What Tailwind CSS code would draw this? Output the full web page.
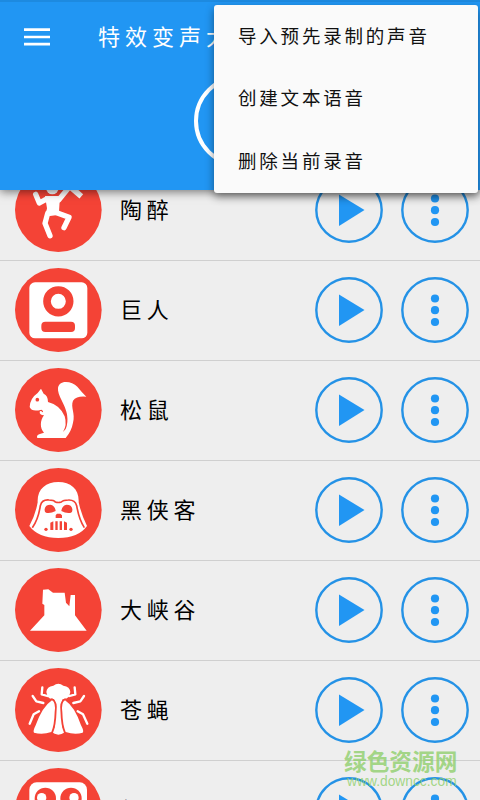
<!DOCTYPE html>
<html lang="zh-CN">
<head>
<meta charset="utf-8">
<title>特效变声大师</title>
<script src="https://cdn.jsdelivr.net/npm/@tailwindcss/browser@4"></script>
</head>
<body class="bg-[#eeeeee] font-['Noto_Sans_CJK_SC',sans-serif]">
<svg class="hidden">
  <symbol id="play" viewBox="0 0 68 66"><ellipse cx="34" cy="33" rx="32.7" ry="31.7" fill="none" stroke="#2492e6" stroke-width="2.4"/><path d="M24 17.5L49.5 33L24 49z" fill="#2196f3"/></symbol>
  <symbol id="more" viewBox="0 0 68 66"><ellipse cx="34" cy="33" rx="32.7" ry="31.7" fill="none" stroke="#2492e6" stroke-width="2.4"/><g fill="#2196f3"><circle cx="34" cy="21.5" r="4.1"/><circle cx="34" cy="33.2" r="4.1"/><circle cx="34" cy="45" r="4.1"/></g></symbol>
</svg>
<div class="relative h-[800px] w-[480px] overflow-hidden">
  <header class="relative z-10 h-[190px] border-t-2 border-[#1d8ae0] bg-[#2196f3] shadow-[0_2px_9px_rgba(0,0,0,0.5)]">
    <div class="flex h-[70px] items-center pl-6">
      <svg class="h-[18px] w-[26px]" viewBox="0 0 26 18"><path d="M0 1.7H26M0 9H26M0 16.2H26" stroke="#fff" stroke-width="2.7"/></svg>
      <h1 class="ml-[48px] whitespace-nowrap pb-1 text-[22px] leading-none tracking-[5px] text-white">特效变声大师</h1>
    </div>
    <div class="mx-auto mt-[3px] h-[92px] w-[92px] rounded-full border-4 border-white"></div>
  </header>

  <main class="-mt-[29px]">
    <section class="flex h-[100px] border-b border-[#cfcfcf] pt-[7px] pl-[15px]">
      <div class="flex h-[84px] w-full items-center">
        <svg class="h-[84px] w-[87px]" viewBox="45 24 261 252"><ellipse cx="175" cy="150" rx="130" ry="126" fill="#f44336"/><g fill="none" stroke="#fff" stroke-width="16" stroke-linecap="round" stroke-linejoin="round"><path d="M107 103L118 129L142 116M176 120L207 82L186 70M143 160L135 190L150 227M170 158L207 172L192 203"/></g><path d="M135 108H180L177 155L190 163L150 168L136 168L141 145z" fill="#fff"/><circle cx="157" cy="84" r="19" fill="#fff"/><path d="M215 84L244 109" stroke="#fff" stroke-width="17"/></svg>
        <span class="ml-[18px] w-[195px] pb-1 text-[22px] leading-none tracking-[4.7px] text-black">陶醉</span>
        <svg class="h-[66px] w-[68px]"><use href="#play"/></svg>
        <svg class="ml-[18px] h-[66px] w-[68px]"><use href="#more"/></svg>
      </div>
    </section>
    <section class="flex h-[100px] border-b border-[#cfcfcf] pt-[7px] pl-[15px]">
      <div class="flex h-[84px] w-full items-center">
        <svg class="h-[84px] w-[87px]" viewBox="45 24 261 252"><ellipse cx="175" cy="150" rx="130" ry="126" fill="#f44336"/><rect x="88" y="67" width="174" height="168" rx="17" fill="#fff"/><circle cx="175" cy="124" r="34" fill="none" stroke="#f44336" stroke-width="23"/><rect x="124" y="185" width="101" height="31" rx="12" fill="#f44336"/></svg>
        <span class="ml-[18px] w-[195px] pb-1 text-[22px] leading-none tracking-[4.7px] text-black">巨人</span>
        <svg class="h-[66px] w-[68px]"><use href="#play"/></svg>
        <svg class="ml-[18px] h-[66px] w-[68px]"><use href="#more"/></svg>
      </div>
    </section>
    <section class="flex h-[100px] border-b border-[#cfcfcf] pt-[7px] pl-[15px]">
      <div class="flex h-[84px] w-full items-center">
        <svg class="h-[84px] w-[87px]" viewBox="45 24 261 252"><ellipse cx="175" cy="150" rx="130" ry="126" fill="#f44336"/><path d="M123 86L131 101Q144 107 144 126Q180 135 194 169Q202 195 189 216L197 207Q205 190 201 163C197 135 171 105 174 83C180 58 216 64 232 80Q244 95 259 110Q230 107 219 122C211 142 227 160 219 188Q215 212 197 234H112Q107 225 122 221L132 218C119 205 120 181 132 166Q118 165 119 155Q121 150 128 157Q132 154 124 149Q95 157 89 141Q90 115 113 99z" fill="#fff"/><circle cx="112" cy="119" r="5.5" fill="#f44336"/></svg>
        <span class="ml-[18px] w-[195px] pb-1 text-[22px] leading-none tracking-[4.7px] text-black">松鼠</span>
        <svg class="h-[66px] w-[68px]"><use href="#play"/></svg>
        <svg class="ml-[18px] h-[66px] w-[68px]"><use href="#more"/></svg>
      </div>
    </section>
    <section class="flex h-[100px] border-b border-[#cfcfcf] pt-[7px] pl-[15px]">
      <div class="flex h-[84px] w-full items-center">
        <svg class="h-[84px] w-[87px]" viewBox="45 24 261 252"><ellipse cx="175" cy="150" rx="130" ry="126" fill="#f44336"/><path d="M113 127C111 88 137 66 175 66S238 88 236 127Q244 164 261 198Q235 234 175 234T88 198Q107 163 113 127z" fill="#fff"/><path d="M97 203Q115 178 121 137Q126 118 147 120Q162 120 166 126Q175 129 184 126Q190 120 205 120Q225 119 230 137Q237 178 253 203" fill="none" stroke="#f44336" stroke-width="5"/><g fill="#f44336"><path d="M134 147Q136 134 151 134Q165 136 167 153Q151 161 138 158Q133 156 134 147zM217 147Q215 134 200 134Q186 136 184 153Q199 161 213 158Q218 156 217 147zM167 174V166L171 161H181L186 166V174zM151 188L160 184V210H151zM166 184H173V210H166zM179 184H186V210H179zM192 184L201 188V210H192z"/><circle cx="138" cy="208" r="5"/><circle cx="213" cy="208" r="5"/></g></svg>
        <span class="ml-[18px] w-[195px] pb-1 text-[22px] leading-none tracking-[4.7px] text-black">黑侠客</span>
        <svg class="h-[66px] w-[68px]"><use href="#play"/></svg>
        <svg class="ml-[18px] h-[66px] w-[68px]"><use href="#more"/></svg>
      </div>
    </section>
    <section class="flex h-[100px] border-b border-[#cfcfcf] pt-[7px] pl-[15px]">
      <div class="flex h-[84px] w-full items-center">
        <svg class="h-[84px] w-[87px]" viewBox="45 24 261 252"><ellipse cx="175" cy="150" rx="130" ry="126" fill="#f44336"/><path d="M129 89L145 88L159 98H194L198 128L208 139L212 105H225V166L260 212H90L133 166V135L127 131z" fill="#fff"/></svg>
        <span class="ml-[18px] w-[195px] pb-1 text-[22px] leading-none tracking-[4.7px] text-black">大峡谷</span>
        <svg class="h-[66px] w-[68px]"><use href="#play"/></svg>
        <svg class="ml-[18px] h-[66px] w-[68px]"><use href="#more"/></svg>
      </div>
    </section>
    <section class="flex h-[100px] border-b border-[#cfcfcf] pt-[7px] pl-[15px]">
      <div class="flex h-[84px] w-full items-center">
        <svg class="h-[84px] w-[87px]" viewBox="45 24 261 252"><ellipse cx="175" cy="150" rx="130" ry="126" fill="#f44336"/><path d="M139 96Q140 80 160 77Q175 66 190 77Q210 80 211 96L207 110Q194 120 188 117L184 130L187 202L196 216Q184 224 175 224Q163 223 155 216L164 202L167 130L162 117Q149 118 143 110z" fill="#fff"/><path d="M156 121Q168 128 164 156Q163 195 154 216Q127 225 102 218Q98 214 107 196Q127 140 156 121zM195 121Q183 128 187 156Q188 195 197 216Q224 225 248 218Q253 214 243 196Q224 140 195 121z" fill="#fff" stroke="#f44336" stroke-width="11" paint-order="stroke"/><g fill="none" stroke="#fff" stroke-width="7" stroke-linecap="round" stroke-linejoin="round"><path d="M127 82L125 103L142 108M224 82L226 103L209 108M98 108L109 124L130 129M252 108L241 124L220 129M117 154L101 163L89 191M233 154L249 163L262 191"/></g></svg>
        <span class="ml-[18px] w-[195px] pb-1 text-[22px] leading-none tracking-[4.7px] text-black">苍蝇</span>
        <svg class="h-[66px] w-[68px]"><use href="#play"/></svg>
        <svg class="ml-[18px] h-[66px] w-[68px]"><use href="#more"/></svg>
      </div>
    </section>
    <section class="flex h-[100px] border-b border-[#cfcfcf] pt-[7px] pl-[15px]">
      <div class="flex h-[84px] w-full items-center">
        <svg class="h-[84px] w-[87px]" viewBox="45 24 261 252"><ellipse cx="175" cy="150" rx="130" ry="126" fill="#f44336"/><rect x="88" y="67" width="173" height="168" rx="22" fill="#fff"/><g fill="#f44336"><circle cx="136" cy="115" r="32"/><circle cx="213" cy="115" r="32"/></g><g fill="#fff"><circle cx="125" cy="113" r="14"/><circle cx="222" cy="113" r="14"/></g></svg>
        <span class="ml-[18px] w-[195px] pb-1 text-[22px] leading-none tracking-[4.7px] text-black">组</span>
        <svg class="h-[66px] w-[68px]"><use href="#play"/></svg>
        <svg class="ml-[18px] h-[66px] w-[68px]"><use href="#more"/></svg>
      </div>
    </section>
  </main>

  <nav class="absolute top-[5px] left-[214px] z-20 flex h-[188px] w-[264px] flex-col rounded-[3px] bg-[#fafafa] pl-6 text-[18.5px] leading-none tracking-[2.8px] text-[#111] shadow-[0_4px_9px_rgba(0,0,0,0.45)]">
    <a class="flex h-[62px] items-center pb-0.5 whitespace-nowrap">导入预先录制的声音</a>
    <a class="flex h-[63px] items-center pb-0.5 whitespace-nowrap">创建文本语音</a>
    <a class="flex h-[62px] items-center pb-0.5 whitespace-nowrap">删除当前录音</a>
  </nav>

  <div class="absolute top-[749px] left-[344px] z-20 whitespace-nowrap text-[#8fce6b]/80">
    <div class="text-[22.7px] leading-[24px] font-bold">绿色资源网</div>
    <div class="pl-[3px] font-['Liberation_Sans',sans-serif] text-[13.8px] leading-[18px]">www.downcc.com</div>
  </div>
</div>
</body>
</html>
